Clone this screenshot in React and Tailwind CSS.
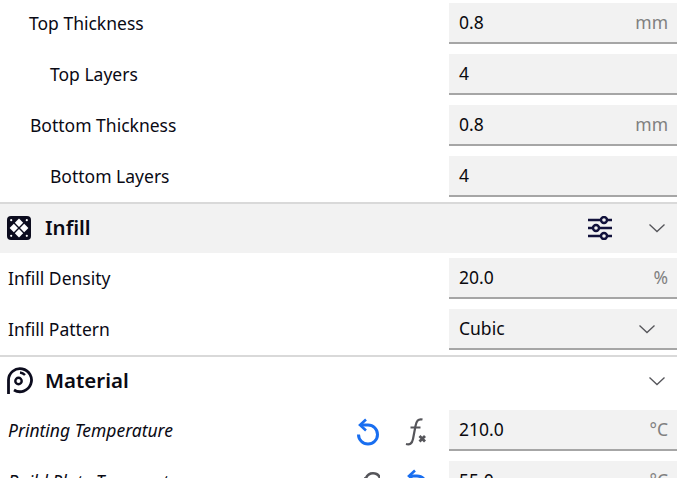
function Arrow({ className = "" }) {
  return (
    <svg width="18" height="10" viewBox="0 0 18 10" className={className} fill="none" stroke="#55555a" strokeWidth="1.3">
      <path d="M1.5 1.5 9 8.5 16.5 1.5" />
    </svg>
  );
}

function ResetIcon() {
  return (
    <svg width="24" height="28" viewBox="0 0 24 28" fill="none" stroke="#196ef0" strokeWidth="3">
      <path d="M5 7h7a9.5 9.5 0 1 1-9.5 9.5" />
      <path d="M10 1.5 4 7l6 5.5" strokeWidth="2.6" />
    </svg>
  );
}

function FxIcon() {
  return (
    <svg width="24" height="28" viewBox="0 0 24 28" fill="none" stroke="#55555a">
      <path d="M17.5 1.5C13 0.5 11.5 3 10.5 8L8 21C7 26 4.5 27 1 26" strokeWidth="2.2" />
      <path d="M5.5 9.5H15.5" strokeWidth="2" />
      <path d="M14.5 18 20 23.5M20 18 14.5 23.5" strokeWidth="2.8" />
    </svg>
  );
}

function LimitIcon() {
  return (
    <svg width="24" height="28" viewBox="0 0 24 28" fill="none" stroke="#55555a" strokeWidth="2.6">
      <path d="M10 9A7.5 7.5 0 0 1 24 9V28" />
      <path d="M8 9.5H10.5" />
    </svg>
  );
}

function Field({ value, unit, select }) {
  return (
    <div className="flex h-[41px] w-[228px] items-center justify-between border-b-2 border-[#a6a6a6] bg-[#f2f2f2] pl-[10px] pr-[9px] text-[#0a0a0f]">
      <span className="text-[17.5px]">{value}</span>
      {unit ? <span className="text-[17.5px] text-[#808080]">{unit}</span> : null}
      {select ? <Arrow className="mr-[12px]" /> : null}
    </div>
  );
}

function Row({ label, indent = 8, italic, value, unit, select, actions }) {
  return (
    <div className="mb-[10px] flex h-[41px] items-center justify-between">
      <span className={`text-[17.5px] text-[#0a0a14] ${italic ? "italic" : ""}`} style={{ paddingLeft: indent }}>
        {label}
      </span>
      <div className="flex items-center">
        {actions}
        <Field value={value} unit={unit} select={select} />
      </div>
    </div>
  );
}

function Section({ icon, title, extra, shaded }) {
  return (
    <div className="border-t-2 border-[#d9d9d9]">
      <div className={`flex h-[49px] items-center pb-[2px] pl-[7px] ${shaded ? "bg-[#f2f2f2]" : ""}`}>
        <span className="flex w-[38px] items-center">{icon}</span>
        <span className="text-[20.5px] font-semibold text-[#0a0a14]">{title}</span>
        <span className="ml-auto flex items-center">
          {extra}
          <Arrow className="mr-[11px]" />
        </span>
      </div>
    </div>
  );
}

function InfillIcon() {
  return (
    <svg width="24" height="24" viewBox="0 0 24 24">
      <rect width="24" height="24" rx="4" fill="#0c0c1e" />
      <g fill="#fff">
        <path d="M12 2.6 16.2 6.8 12 11 7.8 6.8Z" />
        <path d="M12 13 16.2 17.2 12 21.4 7.8 17.2Z" />
        <path d="M6.8 7.8 11 12 6.8 16.2 2.6 12Z" />
        <path d="M17.2 7.8 21.4 12 17.2 16.2 13 12Z" />
        <circle cx="4.2" cy="4.2" r="1.1" />
        <circle cx="19.8" cy="4.2" r="1.1" />
        <circle cx="4.2" cy="19.8" r="1.1" />
        <circle cx="19.8" cy="19.8" r="1.1" />
      </g>
    </svg>
  );
}

function MaterialIcon() {
  return (
    <svg width="28" height="28" viewBox="0 0 28 28" fill="none" stroke="#0c0c1e" className="-ml-[1px] -mt-[2px]">
      <path d="M2.5 28V14A11.5 11.5 0 1 1 8 24" strokeWidth="2.8" />
      <circle cx="12.5" cy="15" r="3.2" strokeWidth="2.4" />
      <path d="M14 6.5A8 8 0 0 1 19 9" strokeWidth="2.4" />
    </svg>
  );
}

function SlidersIcon() {
  return (
    <svg width="24" height="24" viewBox="0 0 24 24" className="mr-[36px]" fill="none" stroke="#12123c">
      <path d="M0 4h24M0 12h24M0 20h24" strokeWidth="2.6" />
      <circle cx="16" cy="4" r="3" fill="#f2f2f2" strokeWidth="2.4" />
      <circle cx="8" cy="12" r="3" fill="#f2f2f2" strokeWidth="2.4" />
      <circle cx="16" cy="20" r="3" fill="#f2f2f2" strokeWidth="2.4" />
    </svg>
  );
}

function Actions({ children }) {
  return <span className="mr-[20px] mt-[2px] flex items-center gap-[25px]">{children}</span>;
}

export default function App() {
  return (
    <div className="h-[478px] overflow-hidden bg-white font-['Noto_Sans',sans-serif]">
      <div className="w-[677px] pt-[3px]">
        <Row label="Top Thickness" indent={29} value="0.8" unit="mm" />
        <Row label="Top Layers" indent={50} value="4" />
        <Row label="Bottom Thickness" indent={30} value="0.8" unit="mm" />
        <div className="-mb-[5px]">
          <Row label="Bottom Layers" indent={50} value="4" />
        </div>
        <Section icon={<InfillIcon />} title="Infill" extra={<SlidersIcon />} shaded />
        <div className="pt-[5px]">
          <Row label="Infill Density" value="20.0" unit="%" />
          <div className="-mb-[5px]">
            <Row label="Infill Pattern" value="Cubic" select />
          </div>
        </div>
        <Section icon={<MaterialIcon />} title="Material" />
        <div className="pt-[4px]">
          <Row
            label="Printing Temperature"
            italic
            value="210.0"
            unit="°C"
            actions={
              <Actions>
                <ResetIcon />
                <FxIcon />
              </Actions>
            }
          />
          <Row
            label="Build Plate Temperature"
            italic
            value="55.0"
            unit="°C"
            actions={
              <Actions>
                <LimitIcon />
                <ResetIcon />
              </Actions>
            }
          />
        </div>
      </div>
    </div>
  );
}
